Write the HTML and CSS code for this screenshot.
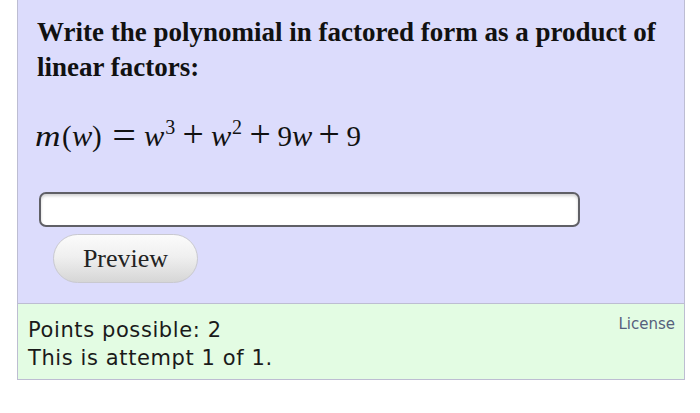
FILE: index.html
```html
<!DOCTYPE html>
<html>
<head>
<meta charset="utf-8">
<link rel="stylesheet" href="styles.css">
</head>
<body>
<div class="question">
  <div class="qbody">
    <p class="prompt">Write the polynomial in factored form as a product of linear factors:</p>
    <p class="math"><span class="v vm">m</span><span class="lp">(</span><span class="v vw">w</span><span class="rp">)</span><span class="rel">=</span><span class="v vw">w</span><sup>3</sup><span class="op">+</span><span class="v vw">w</span><sup>2</sup><span class="op">+</span><span class="num">9</span><span class="v vw">w</span><span class="op">+</span><span class="num">9</span></p>
    <input class="answer" type="text">
    <button class="preview" type="button">Preview</button>
  </div>
  <div class="qinfo">
    <div class="attempts">
      <div>Points possible: 2</div>
      <div>This is attempt 1 of 1.</div>
    </div>
    <a class="license">License</a>
  </div>
</div>
</body>
</html>
```

FILE: styles.css
```css
html, body {
  margin: 0;
  padding: 0;
  background: #ffffff;
}

.question {
  margin-left: 17px;
  width: 668px;
  box-sizing: border-box;
  border: 1px solid #bdbdd2;
  border-top: none;
}

.qbody {
  background: #dcdcfc;
  padding: 15px 19px 20px 19px;
  display: flex;
  flex-direction: column;
  align-items: flex-start;
}

.prompt {
  margin: 0;
  font-family: "Liberation Serif", "Times New Roman", serif;
  font-weight: bold;
  font-size: 27px;
  line-height: 35px;
  color: #111;
}

.math {
  margin: 34px 0 0 -2px;
  font-family: "Liberation Serif", "Times New Roman", serif;
  font-size: 29px;
  line-height: 35px;
  color: #111;
  white-space: nowrap;
}

.math span {
  display: inline-block;
}

.math .v {
  font-style: italic;
}

.math .vm {
  transform: scaleX(1.22);
  transform-origin: 0 50%;
  margin-right: 6px;
}

.math .vw {
  transform: scaleX(1.05);
  transform-origin: 0 50%;
}

.math .rp {
  margin-left: 1px;
}

.math sup {
  font-size: 20px;
  line-height: 0;
  vertical-align: 12px;
  margin-left: 2px;
}

.math .rel {
  transform: scale(1.45, 1.3);
  transform-origin: 50% 62%;
  margin: 0 12px 0 14px;
}

.math .op {
  transform: scale(1.3);
  transform-origin: 50% 66%;
  margin: 0 9px 0 10px;
}

.answer {
  margin: 38px 0 0 2px;
  width: 541px;
  height: 35px;
  box-sizing: border-box;
  border: 2px solid #606066;
  border-radius: 7px;
  background: #ffffff;
  box-shadow: inset 0 2px 3px rgba(0, 0, 0, 0.18);
  padding: 0 6px;
}

.preview {
  margin: 7px 0 0 16px;
  width: 145px;
  height: 49px;
  border: 1px solid #c9c9cf;
  border-radius: 25px;
  background: linear-gradient(#fbfbfb, #f0f0f0 45%, #d6d6d6);
  font-family: "Liberation Serif", "Times New Roman", serif;
  font-size: 26px;
  color: #222;
  padding: 0;
}

.qinfo {
  background: #e3fce3;
  border-top: 1px solid #bdbdd2;
  padding: 12px 9px 7px 10px;
  display: flex;
  justify-content: space-between;
  align-items: flex-start;
}

.attempts {
  font-family: "DejaVu Sans", Verdana, sans-serif;
  font-size: 21px;
  letter-spacing: 0.6px;
  line-height: 28px;
  color: #1a1a1a;
}

.license {
  margin-top: -2px;
  font-family: "DejaVu Sans", Verdana, sans-serif;
  font-size: 15px;
  line-height: 20px;
  color: #56607c;
  text-decoration: none;
}
```
